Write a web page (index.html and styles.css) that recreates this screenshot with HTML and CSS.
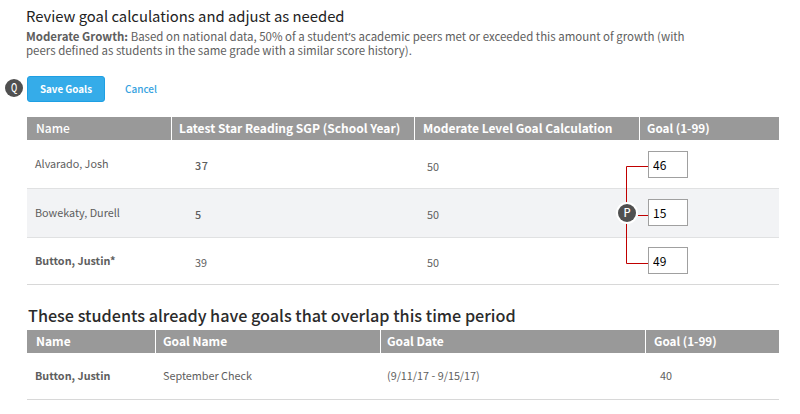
FILE: index.html
```html
<!DOCTYPE html>
<html lang="en">
<head>
  <meta charset="UTF-8">
  <meta name="viewport" content="width=device-width, initial-scale=1">
  <title>Review goal calculations</title>
  <link rel="stylesheet" href="styles.css">
</head>
<body>

<div class="page">
  <h1 class="title">Review goal calculations and adjust as needed</h1>
  <div class="intro">
    <div><b>Moderate Growth:</b> Based on national data, 50% of a student<span class="apos">’</span>s academic peers met or exceeded this amount of growth (with</div>
    <div>peers defined as students in the same grade with a similar score history).</div>
  </div>

  <div class="actions">
    <span class="badge"><span class="letter narrow">Q</span></span>
    <button class="save">Save Goals</button>
    <a class="cancel">Cancel</a>
  </div>

  <div class="table goals">
    <div class="head">
      <div class="cell first light">Name</div>
      <div class="cell">Latest Star Reading SGP (School Year)</div>
      <div class="cell">Moderate Level Goal Calculation</div>
      <div class="cell small">Goal (1-99)</div>
    </div>
    <div class="row">
      <div class="cell name">Alvarado, Josh</div>
      <div class="cell sgp wide">37</div>
      <div class="cell calc">50</div>
      <div class="cell goal"><input class="goal-input" type="text" value="46"></div>
    </div>
    <div class="row shaded">
      <div class="cell name">Bowekaty, Durell</div>
      <div class="cell sgp semi">5</div>
      <div class="cell calc">50</div>
      <div class="cell goal"><input class="goal-input" type="text" value="15"></div>
    </div>
    <div class="row last">
      <div class="cell name strong">Button, Justin*</div>
      <div class="cell sgp">39</div>
      <div class="cell calc">50</div>
      <div class="cell goal"><input class="goal-input" type="text" value="49"></div>
    </div>

    <!-- callout P with its lines to the three goal boxes -->
    <svg class="lines" width="32" height="100" viewBox="0 0 32 100">
      <path d="M22 .5H.5V97.5H22M12 49.5H22" fill="none" stroke="#c00000"/>
    </svg>
    <span class="badge callout"><span class="letter">P</span></span>
  </div>

  <h2 class="subtitle">These students already have goals that overlap this time period</h2>

  <div class="table overlap">
    <div class="head">
      <div class="cell first">Name</div>
      <div class="cell">Goal Name</div>
      <div class="cell date-head">Goal Date</div>
      <div class="cell small">Goal (1-99)</div>
    </div>
    <div class="row">
      <div class="cell name strong">Button, Justin</div>
      <div class="cell gname">September Check</div>
      <div class="cell date">(9/11/17 - 9/15/17)</div>
      <div class="cell value">40</div>
    </div>
  </div>
</div>

</body>
</html>
```
FILE: styles.css
```css
* {
  box-sizing: border-box;
}
body {
  margin: 0;
  background: #fff;
  color: #5e5e5e;
  font-family: "Noto Sans CJK SC", "Noto Sans", sans-serif;
  font-size: 10.8px;
}
.page {
  width: 779px;
  padding: 6px 0 0 27px;
}
.title {
  margin: 0 0 0 -1px;
  font-size: 14.8px;
  font-weight: 400;
  line-height: 20px;
  color: #222;
  white-space: nowrap;
}
.intro {
  margin: 3px 0 0 -1px;
  font-size: 11.48px;
  line-height: 14px;
  white-space: nowrap;
}
.apos {
  font-family: "Noto Sans", sans-serif;
  line-height: 1;
}
.actions {
  display: flex;
  align-items: center;
  height: 26px;
  margin: 19px 0 15px -22px;
}
.badge {
  width: 18px;
  height: 18px;
  border-radius: 50%;
  background: #505050;
  color: #fff;
  font-size: 11px;
  font-weight: 500;
  line-height: 17px;
  text-align: center;
}
.actions .badge {
  margin-bottom: 3px;
}
.letter {
  display: block;
}
.narrow {
  transform: scaleX(.75);
}
.save {
  width: 78px;
  height: 26px;
  margin-left: 4px;
  padding: 0;
  border: 1px solid #1e9fe3;
  border-radius: 3px;
  background: #35ace9;
  color: #fff;
  font-family: inherit;
  font-size: 9.8px;
  font-weight: 700;
  line-height: 22px;
}
.cancel {
  margin: 0 0 1px 20px;
  color: #35a2e0;
  font-size: 10px;
  font-weight: 500;
  line-height: 24px;
}
.table {
  position: relative;
}
.head,
.row {
  display: grid;
}
.row {
  height: 49px;
  border-bottom: 1px solid #e0e1e2;
}
.goals .head,
.goals .row {
  grid-template-columns: 144px 243px 225px 140px;
}
.overlap .head,
.overlap .row {
  grid-template-columns: 128px 225px 265px 134px;
}
.head {
  height: 23px;
  background: #999;
  color: #fff;
  font-size: 12px;
  font-weight: 700;
}
.shaded {
  background: #f2f3f5;
}
.cell {
  white-space: nowrap;
  line-height: 16px;
  padding-top: 15px;
}
.head .cell {
  padding: 3px 0 0 7px;
  border-left: 1px solid #fff;
}
.head .first {
  padding-left: 9px;
  border-left: 0;
}
.head .light {
  font-weight: 500;
}
.head .small {
  font-size: 11.7px;
}
.goals .head .cell:nth-child(3),
.overlap .head .small {
  padding-left: 8px;
}
.head .date-head {
  padding-left: 6px;
}
.name {
  padding-left: 8px;
}
.strong {
  font-weight: 700;
}
.sgp {
  padding: 17px 0 0 24px;
}
.wide {
  font-weight: 500;
  letter-spacing: .5px;
}
.semi {
  font-weight: 500;
}
.calc {
  padding: 18px 0 0 13px;
}
.shaded .calc {
  padding-top: 17px;
}
.goal {
  padding: 11px 0 0 9px;
}
.shaded .goal {
  padding-top: 10px;
}
.last {
  height: 47px;
  border-color: #d8d8d8;
}
.last .name {
  padding-top: 14px;
}
.last .sgp,
.last .calc {
  padding-top: 16px;
}
.last .goal {
  padding-top: 9px;
}
.goal-input {
  display: block;
  width: 40px;
  height: 27px;
  padding: 0 0 1px 4px;
  border: 1px solid #a0a0a0;
  border-radius: 0;
  background: #fff;
  color: #000;
  font-family: inherit;
  font-size: 12px;
}
.lines {
  position: absolute;
  left: 599px;
  top: 49px;
}
.callout {
  position: absolute;
  left: 591px;
  top: 87px;
  box-shadow: 0 0 0 2px #fff;
}
.subtitle {
  margin: 18px 0 0 1px;
  font-size: 16.2px;
  font-weight: 500;
  line-height: 24px;
  color: #2b2b2b;
  white-space: nowrap;
}
.overlap {
  margin-top: 3px;
}
.overlap .row {
  height: 47px;
  border-color: #d8d8d8;
}
.overlap .row .cell {
  padding-top: 14px;
}
.gname {
  padding-left: 8px;
}
.date {
  padding-left: 7px;
}
.value {
  padding-left: 15px;
}
```
